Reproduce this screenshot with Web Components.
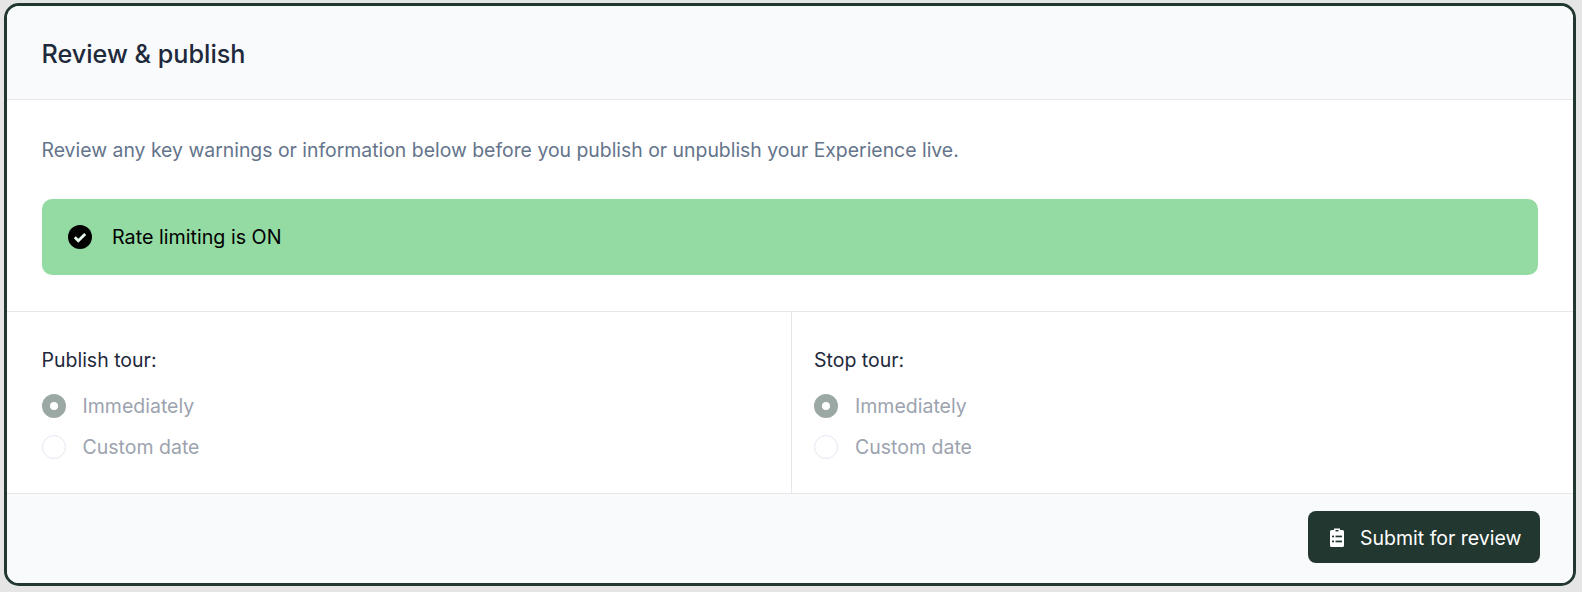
<!DOCTYPE html>
<html lang="en">
<head>
<meta charset="utf-8">
<title>Review & publish</title>
<style>
  html, body { margin: 0; height: 100%; }
  body {
    background: #e5e5e5;
    padding: 3px 6px 6px 4px;
    box-sizing: border-box;
    font-family: "Inter", "Noto Sans", sans-serif;
  }
</style>
</head>
<body>
<review-card>
  <span slot="title">Review &amp; publish</span>
  <span slot="intro">Review any key warnings or information below before you publish or unpublish your Experience live.</span>
  <status-alert slot="alert">Rate limiting is ON</status-alert>
  <schedule-field slot="left" legend="Publish tour:"></schedule-field>
  <schedule-field slot="right" legend="Stop tour:"></schedule-field>
  <submit-button slot="footer">Submit for review</submit-button>
</review-card>

<script>
// ==================================================
// CARD
// ==================================================
class ReviewCard extends HTMLElement {
  constructor() {
    super();
    this.attachShadow({ mode: "open" });
    this.shadowRoot.innerHTML = `
      <style>
        :host {
          display: flex;
          flex-direction: column;
          box-sizing: border-box;
          height: 100%;
          border: 3px solid #22372f;
          border-radius: 15px;
          background: #fff;
          overflow: hidden;
        }
        header {
          height: 94px;
          flex: none;
          display: flex;
          align-items: center;
          padding: 3px 35px 0 34.5px;
          background: #f8fafc;
          border-bottom: 1px solid #e5e7eb;
          box-sizing: border-box;
          font-size: 25.2px;
          font-weight: 550;
          color: #1e293b;
        }
        .top {
          flex: none;
          height: 212px;
          box-sizing: border-box;
          padding: 36px 35px 0 34.5px;
          border-bottom: 1px solid #e5e7eb;
        }
        .intro {
          font-size: 19.4px;
          line-height: 28px;
          color: #64748b;
          margin-bottom: 35px;
        }
        .cols {
          flex: none;
          height: 182px;
          display: grid;
          grid-template-columns: 784px 1fr;
          border-bottom: 1px solid #e5e7eb;
          box-sizing: border-box;
        }
        .col { padding: 34px 35px 0 34.5px; box-sizing: border-box; }
        .col + .col { border-left: 1px solid #e5e7eb; padding-left: 22px; }
        footer {
          flex: 1;
          display: flex;
          justify-content: flex-end;
          align-items: center;
          padding: 0 33px 3px;
          background: #f8fafc;
        }
      </style>
      <header><slot name="title"></slot></header>
      <div class="top">
        <div class="intro"><slot name="intro"></slot></div>
        <slot name="alert"></slot>
      </div>
      <div class="cols">
        <div class="col"><slot name="left"></slot></div>
        <div class="col"><slot name="right"></slot></div>
      </div>
      <footer><slot name="footer"></slot></footer>
    `;
  }
}
customElements.define("review-card", ReviewCard);

// ==================================================
// ALERT
// ==================================================
class StatusAlert extends HTMLElement {
  constructor() {
    super();
    this.attachShadow({ mode: "open" });
    this.shadowRoot.innerHTML = `
      <style>
        :host {
          display: flex;
          align-items: center;
          gap: 20px;
          height: 76px;
          padding: 0 26.5px;
          box-sizing: border-box;
          background: #93daa3;
          border-radius: 10px;
          color: #000;
          font-size: 19.7px;
        }
        svg { width: 24px; height: 24px; flex: none; }
      </style>
      <svg viewBox="0 0 24 24">
        <circle cx="12" cy="12" r="12" fill="#000"/>
        <path d="M6.800 12.300l3.500 3.500L17.200 9" fill="none" stroke="#e8f7eb" stroke-width="2.800"/>
      </svg>
      <slot></slot>
    `;
  }
}
customElements.define("status-alert", StatusAlert);

// ==================================================
// RADIO
// ==================================================
class RadioRow extends HTMLElement {
  constructor() {
    super();
    this.attachShadow({ mode: "open" });
    this.shadowRoot.innerHTML = `
      <style>
        :host {
          display: flex;
          align-items: center;
          gap: 17px;
          height: 24px;
          color: #9ca3af;
          font-size: 19.5px;
        }
        .dot {
          width: 24px;
          height: 24px;
          box-sizing: border-box;
          flex: none;
          border-radius: 50%;
          border: 1px solid #e2e8f0;
          background: #fff;
        }
        :host([checked]) .dot {
          border: 8px solid #9ca8a3;
        }
      </style>
      <span class="dot"></span>
      <slot></slot>
    `;
  }
}
customElements.define("radio-row", RadioRow);

// ==================================================
// FIELD
// ==================================================
class ScheduleField extends HTMLElement {
  constructor() {
    super();
    this.attachShadow({ mode: "open" });
    this.shadowRoot.innerHTML = `
      <style>
        :host { display: flex; flex-direction: column; }
        .legend {
          font-size: 19.5px;
          line-height: 28px;
          color: #1e293b;
          margin-bottom: 20px;
        }
        .list { display: flex; flex-direction: column; gap: 17px; }
      </style>
      <div class="legend"></div>
      <div class="list">
        <radio-row checked>Immediately</radio-row>
        <radio-row>Custom date</radio-row>
      </div>
    `;
  }

  connectedCallback() {
    this.shadowRoot.querySelector(".legend").textContent = this.getAttribute("legend");
  }
}
customElements.define("schedule-field", ScheduleField);

// ==================================================
// BUTTON
// ==================================================
class SubmitButton extends HTMLElement {
  constructor() {
    super();
    this.attachShadow({ mode: "open" });
    this.shadowRoot.innerHTML = `
      <style>
        :host { display: block; }
        button {
          display: flex;
          align-items: center;
          gap: 15px;
          width: 232px;
          height: 52px;
          padding: 2px 0 0 21px;
          box-sizing: border-box;
          border: 0;
          border-radius: 8px;
          background: #22372f;
          color: #fff;
          font: inherit;
          font-size: 19.5px;
        }
        svg { width: 16px; height: 20px; flex: none; }
      </style>
      <button>
        <svg viewBox="0 0 16 20">
          <path fill="#fff" d="M5 .5h6v1.500h2.500A1.500 1.500 0 0 1 15 3.500v14a1.500 1.500 0 0 1-1.500 1.500h-11A1.500 1.500 0 0 1 1 17.500v-14A1.500 1.500 0 0 1 2.500 2H5z"/>
          <rect x="6.500" y="2" width="3" height="1.400" fill="#22372f"/>
          <rect x="3" y="7.600" width="2" height="1.700" fill="#22372f"/>
          <rect x="6.500" y="7.600" width="6.500" height="1.700" fill="#22372f"/>
          <rect x="3" y="12.600" width="2" height="1.700" fill="#22372f"/>
          <rect x="6.500" y="12.600" width="6.500" height="1.700" fill="#22372f"/>
        </svg>
        <slot></slot>
      </button>
    `;
  }
}
customElements.define("submit-button", SubmitButton);
</script>
</body>
</html>
